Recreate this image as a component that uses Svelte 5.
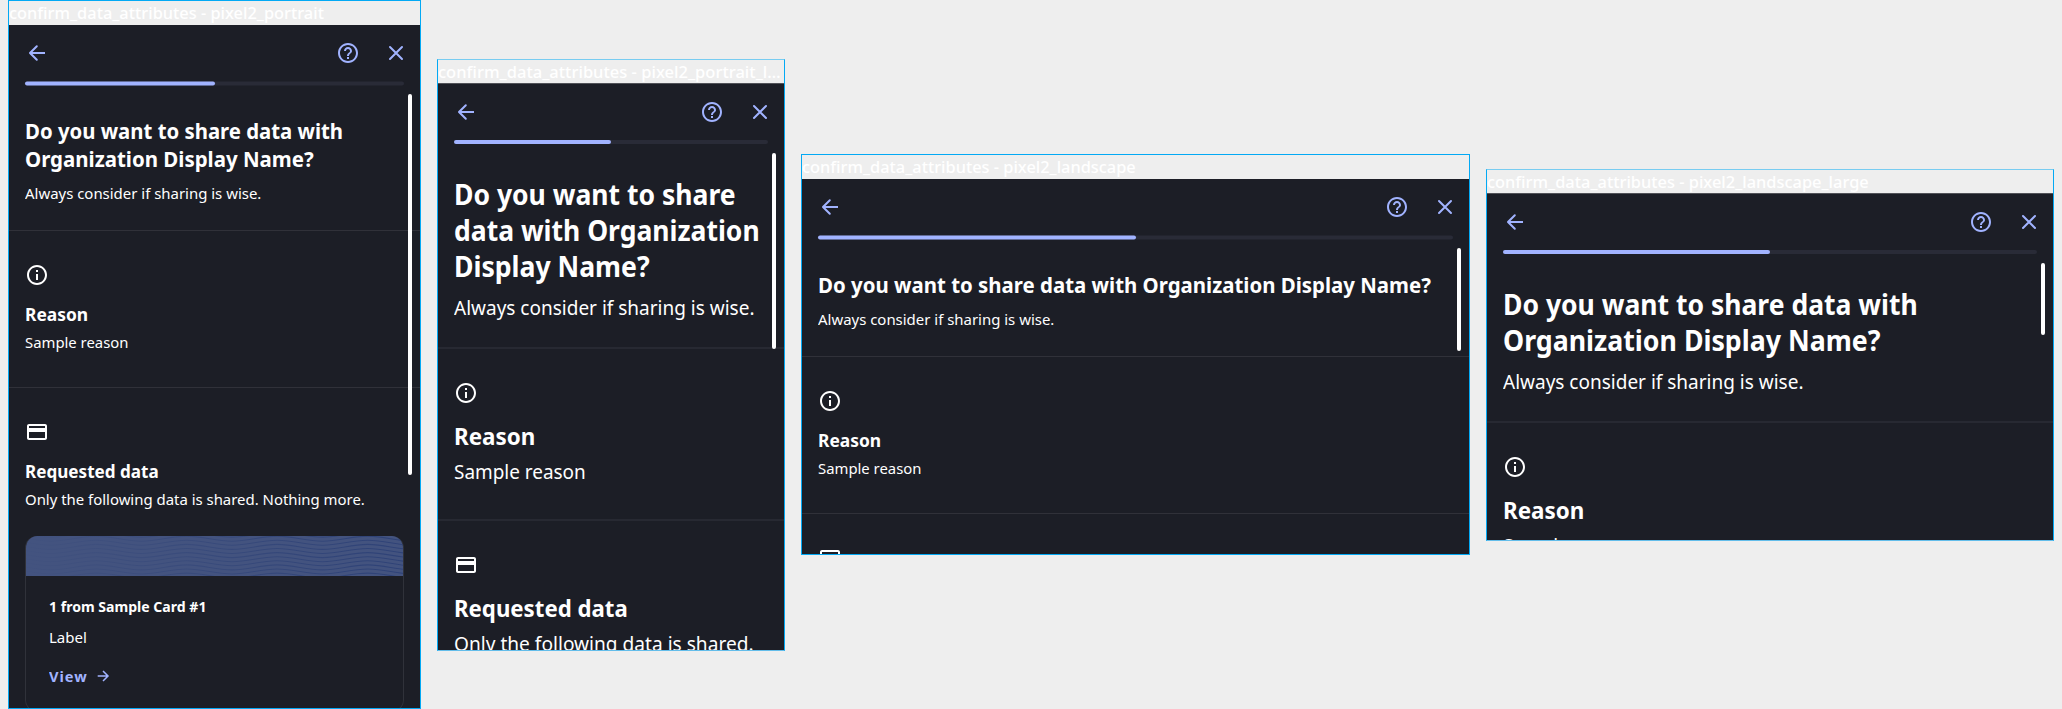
<script>
  const ORG = 'Organization';
  const frames = [
    {
      name: 'pixel2_portrait', nameWidth: 315, width: 413, height: 709, large: false, bar: 381,
      title: [['Do you want to share data with', 318], [ORG + ' Display Name?', 289]]
    },
    {
      name: 'pixel2_portrait_l…', nameWidth: 343, width: 348, height: 592, large: true, bar: 196,
      title: [['Do you want to share', 282], ['data with ' + ORG, 306], ['Display Name?', 196]]
    },
    {
      name: 'pixel2_landscape', nameWidth: 334, width: 669, height: 401, large: false, bar: 103,
      title: [['Do you want to share data with ' + ORG + ' Display Name?', 612.5]]
    },
    {
      name: 'pixel2_landscape_large', nameWidth: 382, width: 568, height: 372, large: true, bar: 72,
      title: [['Do you want to share data with', 415], [ORG + ' Display Name?', 377]]
    }
  ];

  const small = { always: 236, reason: 63, sample: 103, requested: 134, only: 340 };
  const big = { always: 301, reason: 81, sample: 132, requested: 174, only: 300 };

  const waves = Array.from({ length: 15 }, (_, i) => {
    const y = i * 4.1 - 8;
    let d = `M-66 ${y + 5}`;
    for (let x = -66; x < 420; x += 91) {
      d += `C${x + 18} ${y + 5} ${x + 27} ${y} ${x + 45.5} ${y}S${x + 73} ${y + 5} ${x + 91} ${y + 5}`;
    }
    return d;
  });

  // Condenses a line of text to the given width.
  function fit(node, width) {
    node.style.transform = `scaleX(${width / node.offsetWidth})`;
  }
</script>

<main>
  {#each frames as f}
    {@const w = f.large ? big : small}
    <section class="frame" class:large={f.large} style="width:{f.width}px;height:{f.height}px">
      <div class="label"><span class="line" use:fit={f.nameWidth}>confirm_data_attributes - {f.name}</span></div>
      <div class="screen">
        <header>
          <svg class="icon" viewBox="0 0 24 24" fill="none" stroke="currentColor" stroke-width="2" stroke-linecap="round" stroke-linejoin="round">
            <path d="M11.8 5.2 5 12l6.8 6.8" /><path d="M5.4 12H20" stroke-linecap="butt" />
          </svg>
          <span class="grow"></span>
          <svg class="icon" viewBox="0 0 24 24" fill="currentColor">
            <path d="M11 18h2v-2h-2v2zm1-16C6.48 2 2 6.48 2 12s4.48 10 10 10 10-4.48 10-10S17.52 2 12 2zm0 18c-4.41 0-8-3.59-8-8s3.59-8 8-8 8 3.59 8 8-3.59 8-8 8zm0-14c-2.21 0-4 1.79-4 4h2c0-1.1.9-2 2-2s2 .9 2 2c0 2-3 1.75-3 5h2c0-2.25 3-2.5 3-5 0-2.21-1.79-4-4-4z" />
          </svg>
          <svg class="icon" viewBox="0 0 24 24" fill="none" stroke="currentColor" stroke-width="2" stroke-linecap="round">
            <path d="m6 6 12 12M18 6 6 18" />
          </svg>
        </header>
        <div class="progress"><div></div></div>
        <div class="body">
          <div class="intro">
            <h1>{#each f.title as [text, tw]}<span class="line" use:fit={tw}>{text}</span>{/each}</h1>
            <p><span class="line" use:fit={w.always}>Always consider if sharing is wise.</span></p>
          </div>
          <div class="part">
            <svg class="icon" viewBox="0 0 24 24" fill="currentColor">
              <path d="M11 7h2v2h-2zm0 4h2v6h-2zm1-9C6.48 2 2 6.48 2 12s4.48 10 10 10 10-4.48 10-10S17.52 2 12 2zm0 18c-4.41 0-8-3.59-8-8s3.59-8 8-8 8 3.59 8 8-3.59 8-8 8z" />
            </svg>
            <h2><span class="line" use:fit={w.reason}>Reason</span></h2>
            <p><span class="line" use:fit={w.sample}>Sample reason</span></p>
          </div>
          <div class="part">
            <svg class="icon" viewBox="0 0 24 24" fill="currentColor">
              <path d="M20 4H4c-1.11 0-1.99.89-1.99 2L2 18c0 1.11.89 2 2 2h16c1.11 0 2-.89 2-2V6c0-1.11-.89-2-2-2zm0 14H4v-6h16v6zm0-10H4V6h16v2z" />
            </svg>
            {#if f.height > 500}
              <h2><span class="line" use:fit={w.requested}>Requested data</span></h2>
              <p><span class="line" use:fit={w.only}>Only the following data is shared.{f.large ? '' : ' Nothing more.'}</span></p>
            {/if}
            {#if f.height > 600}
              <article>
                <svg class="waves" viewBox="0 0 379 40" preserveAspectRatio="none">
                  <defs>
                    <linearGradient id="fade" gradientUnits="userSpaceOnUse" x1="0" x2="379" y1="0" y2="0">
                      <stop stop-color="#2c4076" stop-opacity="0.05" /><stop offset="1" stop-color="#2c4076" stop-opacity="0.9" />
                    </linearGradient>
                  </defs>
                  {#each waves as d}<path {d} fill="none" stroke="url(#fade)" stroke-width="1.1" />{/each}
                </svg>
                <div class="content">
                  <h3><span class="line" use:fit={157.5}>1 from Sample Card #1</span></h3>
                  <p><span class="line" use:fit={38}>Label</span></p>
                  <div class="view">
                    <b><span class="line" use:fit={39}>View</span></b>
                    <svg viewBox="0 0 16 16" fill="none" stroke="currentColor" stroke-width="1.5">
                      <path d="M2.7 8h10M8 3l5 5-5 5" />
                    </svg>
                  </div>
                </div>
              </article>
            {/if}
          </div>
        </div>
        <div class="scrollbar" style="height:{f.bar}px"></div>
      </div>
    </section>
  {/each}
</main>

<style>
  :global(body) { background: #eee; overflow: hidden; }
  main {
    display: flex; align-items: center; gap: 16px; height: 709px; padding: 0 8px; box-sizing: border-box;
    font-family: "Noto Sans", "Open Sans", sans-serif; color: #fff;
  }
  .frame {
    flex: none; display: flex; flex-direction: column; box-sizing: border-box;
    border: 1px solid #03a9f4; overflow: hidden;
  }
  .frame.large { border-top-color: #78ccf1; border-bottom-color: #63bdea; }
  .label { flex: none; height: 24px; font-size: 17px; line-height: 24px; font-weight: 500; }
  .large .label { height: 23px; }
  .line { display: block; width: max-content; white-space: nowrap; transform-origin: 0 50%; }
  .screen {
    position: relative; flex: 1; min-height: 0; display: flex; flex-direction: column;
    background: #1c1e26; overflow: hidden;
  }
  .large .screen { border-top: 1px solid #515258; }
  header {
    flex: none; display: flex; align-items: center; gap: 24px; height: 56px; box-sizing: border-box;
    padding: 0 12px 0 16px; color: #a1b3ff;
  }
  .grow { flex: 1; }
  .icon { display: block; flex: none; width: 24px; height: 24px; }
  .progress { flex: none; height: 4px; margin: 0 16px; border-radius: 2px; background: #292b37; transform: translateY(.5px); }
  .large .progress { transform: none; }
  .progress div { width: 50%; height: 4px; border-radius: 2px; background: #a1b3ff; }
  .body { flex: 1; min-height: 0; overflow: hidden; }
  .intro { padding: 31px 16px 27px; }
  h1, h2, h3, p { margin: 0; }
  h1 { font-size: 22px; line-height: 28px; font-weight: 700; }
  h2 { font-size: 18.5px; line-height: 24px; font-weight: 700; margin-top: 15px; }
  h3 { font-size: 15px; line-height: 20px; font-weight: 700; }
  p { font-size: 15px; line-height: 20px; margin-top: 6px; }
  .intro p { margin-top: 11px; }
  .part { padding: 32px 16px 35px; border-top: 1px solid #303139; }
  .large .intro { padding: 32px 16px 26px; }
  .large h1 { font-size: 28.5px; line-height: 36px; }
  .large h2 { font-size: 23.5px; line-height: 30px; margin-top: 16px; }
  .large p { font-size: 19.5px; line-height: 26px; margin-top: 8px; }
  .large .intro p { margin-top: 11px; }
  .large .part { border-top: 2px solid #272932; padding-bottom: 34px; }
  article {
    margin-top: 27px; height: 176px; box-sizing: border-box; border: 1px solid #30323a; border-top: 0;
    border-radius: 12px; overflow: hidden;
  }
  .waves { display: block; width: 100%; height: 40px; background: #43537f; }
  .content { padding: 20px 24px; }
  .content p { margin-top: 11px; }
  .view { display: flex; align-items: center; gap: 8px; margin-top: 19px; color: #a1b3ff; font-size: 15px; line-height: 20px; }
  .view b { width: 38px; letter-spacing: 1px; }
  .view svg { width: 16px; height: 16px; }
  .content { padding-left: 23px; }
  .scrollbar {
    position: absolute; top: 69px; right: 8px; width: 4px; border-radius: 2px; background: #fff;
  }
</style>
